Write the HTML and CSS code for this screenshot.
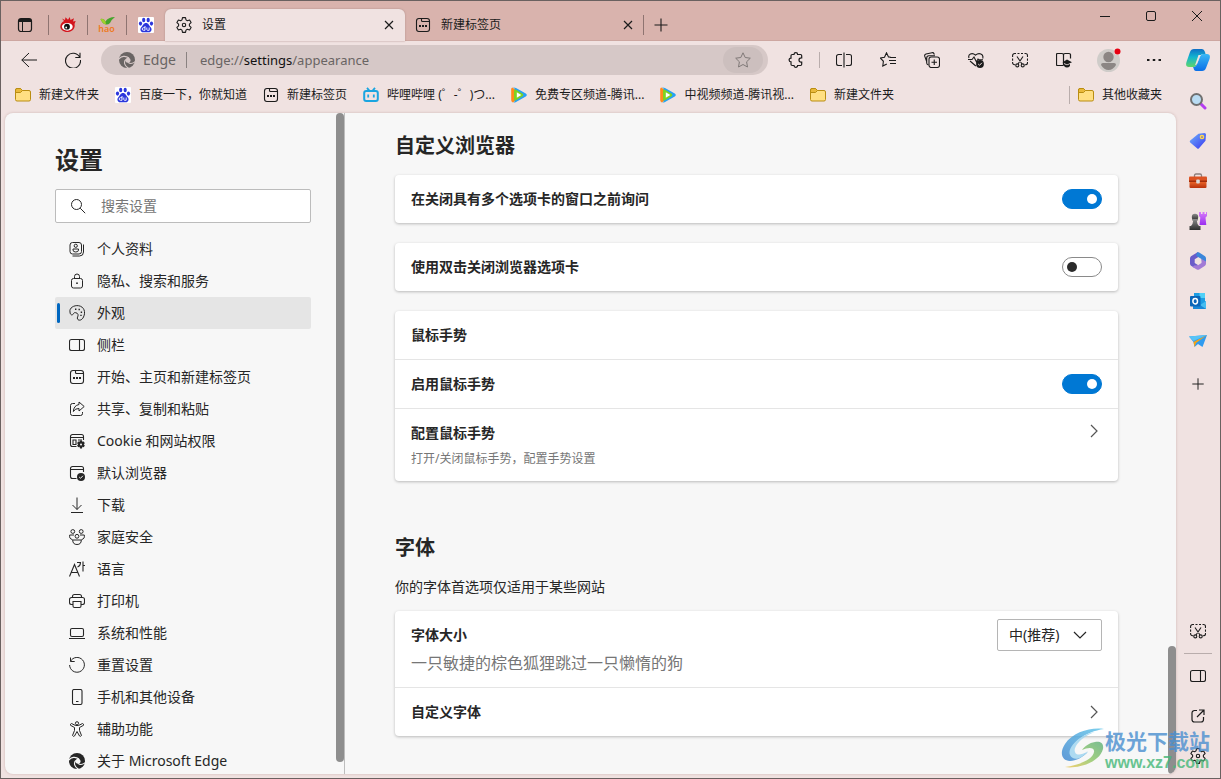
FILE: index.html
```html
<!DOCTYPE html>
<html lang="zh-CN">
<head>
<meta charset="utf-8">
<title>设置</title>
<link rel="stylesheet" href="styles.css">
</head>
<body>
<svg class="sprite" aria-hidden="true">
  <defs>
    <linearGradient id="g-cop1" x1="0" y1="0" x2="0" y2="1"><stop offset="0" stop-color="#0f6fc6"/><stop offset=".45" stop-color="#12b5d0"/><stop offset="1" stop-color="#5fd66a"/></linearGradient>
    <linearGradient id="g-cop2" x1="0" y1="0" x2="0" y2="1"><stop offset="0" stop-color="#39b8f5"/><stop offset="1" stop-color="#0a6fe8"/></linearGradient>
    <linearGradient id="g-tag" x1="0" y1="0" x2="1" y2="1"><stop offset="0" stop-color="#6fb4fb"/><stop offset="1" stop-color="#3a36f0"/></linearGradient>
    <linearGradient id="g-rook" x1="0" y1="0" x2="0" y2="1"><stop offset="0" stop-color="#d77cf9"/><stop offset="1" stop-color="#9b2ff0"/></linearGradient>
    <linearGradient id="g-pawn" x1="0" y1="0" x2="0" y2="1"><stop offset="0" stop-color="#8b8b8b"/><stop offset="1" stop-color="#2e2e2e"/></linearGradient>
    <linearGradient id="g-box" x1="0" y1="0" x2="0" y2="1"><stop offset="0" stop-color="#f06a2c"/><stop offset="1" stop-color="#b8320c"/></linearGradient>
    <linearGradient id="g-wm1" x1="0" y1="1" x2="1" y2="0"><stop offset="0" stop-color="#3a83cf"/><stop offset="1" stop-color="#5cc5ea"/></linearGradient>
    <linearGradient id="g-wm2" x1="0" y1="1" x2="1" y2="0"><stop offset="0" stop-color="#f3c64d"/><stop offset=".5" stop-color="#8cc665"/><stop offset="1" stop-color="#5aae78"/></linearGradient>
  </defs>
  <symbol id="gear" viewBox="0 0 16 16"><g fill="none" stroke="currentColor" stroke-linejoin="round" stroke-width="1.100"><circle cx="8" cy="8" r="1.700"/><path d="M6.500.6h3l.5 2.300 1.300.8 2.300-.7 1.500 2.600-1.700 1.600v1.600l1.700 1.600-1.500 2.600-2.300-.7-1.300.8-.5 2.300h-3l-.5-2.300-1.300-.8-2.300.7L.9 10.400l1.700-1.600V7.200L.9 5.600 2.400 3l2.300.7 1.300-.8z"/></g></symbol>
  <symbol id="newtab" viewBox="0 0 16 16"><g fill="none" stroke="currentColor" stroke-width="1.100"><rect x="1.500" y="1.500" width="13" height="13" rx="2.500"/><path d="M6.500 1.500v2q0 1 1 1h7"/></g><path fill="currentColor" d="M4 8h2v2H4zM7 8h2v2H7zM10 8h2v2h-2z"/></symbol>
  <symbol id="tabs" viewBox="0 0 16 16"><rect x="1.500" y="1.500" width="13" height="13" rx="2.500" fill="none" stroke="currentColor" stroke-width="1.200"/><path d="M2 4.500h12M5.500 4.500v9.500" stroke="currentColor" fill="none"/><path fill="currentColor" d="M2 2h12v2.500H2z"/></symbol>
  <symbol id="close" viewBox="0 0 16 16"><path d="M4 4l8 8M12 4l-8 8" fill="none" stroke="currentColor" stroke-width="1.200"/></symbol>
  <symbol id="plus" viewBox="0 0 16 16"><path d="M8 1.500v13M1.500 8h13" fill="none" stroke="currentColor" stroke-width="1.100"/></symbol>
  <symbol id="folder" viewBox="0 0 16 16"><path d="M.5 3a1.500 1.500 0 0 1 1.500-1.500h3.500L7.500 3.500H14A1.500 1.500 0 0 1 15.500 5v7.500A1.500 1.500 0 0 1 14 14H2A1.500 1.500 0 0 1 .5 12.500z" fill="#ffdf82" stroke="#b98d12"/><path d="M.5 5.500h5l2-2-2-2H2A1.500 1.500 0 0 0 .5 3z" fill="#e9b93a" stroke="#b98d12"/></symbol>
  <symbol id="baidu" viewBox="0 0 16 16"><rect width="16" height="16" rx="1" fill="#fff"/><g fill="#2b35dc"><ellipse cx="5.700" cy="3" rx="1.600" ry="2.300"/><ellipse cx="10.200" cy="3" rx="1.600" ry="2.300"/><ellipse cx="2.500" cy="6.600" rx="1.600" ry="2.100"/><ellipse cx="13.500" cy="6.600" rx="1.600" ry="2.100"/><path d="M8 6c2.500 0 3 2.500 4.500 4 2.300 2.500.5 5.500-1.800 5.300-1.800-.2-3.600-.2-5.400 0C3 15.500 1.200 12.500 3.500 10 5 8.500 5.500 6 8 6z"/></g><path d="M7 9v4.300H5.500a1 1 0 0 1 0-2.600H7M8.800 10.500v2q0 .8.800.8h1.600v-2.800" fill="none" stroke="#fff" stroke-width=".9"/></symbol>
  <symbol id="tencent" viewBox="0 0 16 16"><path d="M1.200.6Q-.2 1 .2 3.500v9q-.3 2.300 1.700 2.900L7 12V4z" fill="#ff8a1f"/><path d="M2 .5q1.500-.3 3 .5l9.800 5.500q2 1.500 0 3L5 15q-1.500.8-3 .4 2-.5 2-3V3.500Q4 1 2 .5z" fill="#27a1f4"/><path d="M3 4q0-2.300 2-1.200l6.700 4q1.400 1.200 0 2.400L5 13.200Q3 14.300 3 12z" fill="#7ed321"/><path d="M5.800 5.300L10.300 8l-4.500 2.700z" fill="#fff"/></symbol>
  <symbol id="edge" viewBox="0 0 16 16"><circle cx="8" cy="8" r="8" fill="currentColor"/><g fill="none" stroke="var(--cut)" stroke-width="1.100"><path d="M-.2 7.200C2 4 6.500 3.300 10 6"/><path d="M6.800 7.500c-2.600 2.700-1 6.700 2.700 8.700"/><path d="M9 10.300c2 1.700 4.500 1.600 7.500-.8"/></g><circle cx="9" cy="8.300" r="2.500" fill="var(--cut)"/></symbol>
  <symbol id="shot" viewBox="0 0 16 16"><g fill="none" stroke="currentColor" stroke-width="1.100"><path d="M.6 5V3.500a2 2 0 0 1 2-2H4M5.500 1.500h2M9 1.500h2M12.500 1.500h1a2 2 0 0 1 2 2V5M15.500 6.500v2.200M15.500 10v.8a2 2 0 0 1-2 2h-.8M.6 6.500v2.200M.6 10v.8a2 2 0 0 0 2 2h.8M5 4.500l5 7.500M11 4.500L6 12"/><circle cx="5.300" cy="13.400" r="1.500"/><circle cx="10.700" cy="13.400" r="1.500"/></g></symbol>
  <symbol id="sidepane" viewBox="0 0 16 16"><rect x=".5" y="2.500" width="15" height="11" rx="2" fill="none" stroke="currentColor" stroke-width="1.100"/><path d="M10.500 2.500v11" fill="none" stroke="currentColor" stroke-width="1.100"/></symbol>
  <symbol id="chevron" viewBox="0 0 16 16"><path d="M5 2l6 6-6 6" fill="none" stroke="currentColor" stroke-width="1.200"/></symbol>
</svg>

<div class="window">
  <header class="titlebar">
    <button class="pin" aria-label="标签操作"><svg><use href="#tabs"/></svg></button>
    <button class="pin" aria-label="微博"><svg viewBox="0 0 16 16"><path d="M4 4L2 1.500 5 3 5.500.2 8 2.700 9.700 0l.8 3L14 1.300l-1 3.200 2.700-.5-1.200 3c1 3.500-1.500 7.500-6.500 8C3.500 15.300.2 12.500.3 9.500.4 7 2 5 4 4z" fill="#d3141c"/><ellipse cx="7.300" cy="9.800" rx="5.400" ry="3.900" fill="#fff"/><circle cx="7" cy="9.700" r="2.900" fill="#111"/><circle cx="6.200" cy="10.500" r=".9" fill="#fff"/></svg></button>
    <button class="pin pin-hao" aria-label="hao"><svg viewBox="0 0 16 8"><path d="M1.500 2Q5 1 6.500 4.500 9 0 16 0q-3 2-5 6-2 2-4 1.500Q3.500 7 1.500 2z" fill="#45a52c"/><path d="M1.500 2Q5 1 6.500 4.500L7 7.500Q3.500 7 1.500 2z" fill="#a0cf2c"/></svg><span>hao</span></button>
    <button class="pin" aria-label="百度"><svg><use href="#baidu"/></svg></button>
    <div class="tab tab-active"><svg><use href="#gear"/></svg><span>设置</span><button aria-label="关闭"><svg><use href="#close"/></svg></button></div>
    <div class="tab"><svg><use href="#newtab"/></svg><span>新建标签页</span><button aria-label="关闭"><svg><use href="#close"/></svg></button></div>
    <button class="newtab" aria-label="新建标签"><svg><use href="#plus"/></svg></button>
    <div class="winctl">
      <button aria-label="最小化"><svg viewBox="0 0 16 16"><path d="M3 8.500h10" stroke="currentColor"/></svg></button>
      <button aria-label="最大化"><svg viewBox="0 0 16 16"><rect x="3.500" y="3.500" width="9" height="9" rx="1.500" fill="none" stroke="currentColor"/></svg></button>
      <button aria-label="关闭窗口"><svg viewBox="0 0 16 16"><path d="M3 3l10 10M13 3L3 13" stroke="currentColor"/></svg></button>
    </div>
  </header>

  <div class="toolbar">
    <button class="tool" aria-label="返回"><svg viewBox="0 0 16 16"><path d="M16 8H.8M8 1L.8 8 8 15" fill="none" stroke="currentColor"/></svg></button>
    <button class="tool" aria-label="刷新"><svg viewBox="0 0 16 16"><path d="M14.800 5.500A7.500 7.500 0 1 0 15.500 8M15 .8V5.500h-4.700" fill="none" stroke="currentColor" stroke-width="1.100"/></svg></button>
    <div class="address">
      <svg class="address-logo"><use href="#edge"/></svg><span class="address-brand">Edge</span>
      <div class="address-url" role="textbox" contenteditable="true" spellcheck="false" aria-label="地址栏">edge://<b>settings</b>/appearance</div>
      <button class="fav" aria-label="收藏"><svg viewBox="0 0 16 16"><path d="M8 .8l2.200 4.700 5.100.7-3.700 3.600.9 5.200L8 12.500 3.500 15l.9-5.200L.7 6.200l5.100-.7z" fill="none" stroke="currentColor" stroke-linejoin="round"/></svg></button>
    </div>
    <button class="tool" aria-label="扩展"><svg viewBox="0 0 16 16"><path d="M6 2.500a1.800 1.800 0 0 1 3.600 0h2.900q1.200 0 1.200 1.200v2.100h-.5a2.200 2.200 0 1 0 0 4.400h.5v2.100q0 1.200-1.200 1.200H9.600a1.800 1.800 0 0 1-3.600 0H4.200Q3 13.500 3 12.300V9.900a1.900 1.900 0 0 1 0-3.800V3.700q0-1.200 1.200-1.200z" fill="none" stroke="currentColor" stroke-width="1.200"/></svg></button>
    <i class="rule"></i>
    <button class="tool" aria-label="分屏"><svg viewBox="0 0 16 16"><path d="M6 2.500H2.500a2 2 0 0 0-2 2v7a2 2 0 0 0 2 2H6M10 2.500h3.500a2 2 0 0 1 2 2v7a2 2 0 0 1-2 2H10M8 .5v15" fill="none" stroke="currentColor" stroke-width="1.100"/></svg></button>
    <button class="tool" aria-label="收藏夹"><svg viewBox="0 0 16 16"><path d="M10.800 5.200l-2.300-.3L6.500.8 4.500 5.200l-4.100.8 3 3.300L2.800 14l4-2M10 5.500h6M9 8.500h7M10 11.500h6" fill="none" stroke="currentColor" stroke-width="1.100"/></svg></button>
    <button class="tool" aria-label="集锦"><svg viewBox="0 0 16 16"><g fill="none" stroke="currentColor" stroke-width="1.100"><path d="M2.700 9.500L.7 4.200Q.3 2.500 2 2L8 .7q1.500-.3 2 1l.3 1M4.500 13Q2.700 12.500 2.700 11V6q0-2.200 2.200-2.200H11"/><rect x="5" y="5" width="10.500" height="10.500" rx="2.200"/><path d="M10.250 7.500v5.500M7.500 10.250H13"/></g></svg></button>
    <button class="tool" aria-label="性能"><svg viewBox="0 0 16 16"><path d="M1 6C-.3 2.500 4 0 7.500 3.200 11 0 16 2 14.700 6.500M0 7.500h4L6 5l2.500 5 1.500-3 1 .8h4M2 9l5.800 5" fill="none" stroke="currentColor" stroke-width="1.100"/><circle cx="12" cy="12" r="3.900" fill="currentColor"/><path d="M10.200 12l1.300 1.300 2.400-2.500" fill="none" stroke="#f0e2e1"/></svg></button>
    <button class="tool" aria-label="截图"><svg><use href="#shot"/></svg></button>
    <button class="tool" aria-label="阅读"><svg viewBox="0 0 16 16"><path d="M7.500 13.500H1.500q-1 0-1-1v-10q0-1 1-1H6q1.500 0 1.500 1.500v10.500M7.500 3Q7.500 1.500 9 1.500h4q1.500 0 1.500 1v4" fill="none" stroke="currentColor" stroke-width="1.200"/><path d="M6.500 10.200L11 7.500l5 2.700-5 2.300zM8 12l3 1.300L14 12v2q-3 3-6 0z" fill="currentColor"/></svg></button>
    <button class="tool profile" aria-label="用户"><svg viewBox="0 0 24 24"><circle cx="11.500" cy="12.500" r="11.500" fill="#cfccc9"/><circle cx="11.500" cy="9" r="5.200" fill="#8b8684"/><path d="M4 17q0-2 2-2h11q2 0 2 2-3 5-7.500 5T4 17z" fill="#8b8684"/><circle cx="20.500" cy="3.500" r="3.500" fill="#f0e2e1"/><circle cx="20.500" cy="3.500" r="3" fill="#e60012"/></svg></button>
    <button class="tool" aria-label="更多"><svg viewBox="0 0 16 16"><path d="M1 7h2.500v2H1zM6.750 7h2.500v2h-2.500zM12.500 7H15v2h-2.500z" fill="currentColor"/></svg></button>
    <button class="copilot" aria-label="Copilot"><svg viewBox="0 0 24 22"><path d="M8 0h8q2 0 3 3l.5 2H17q-2 0-3 2l-3 8q-1 3-3 3H3Q-1 18 .5 13L4 3Q5 0 8 0z" fill="url(#g-cop1)"/><path d="M16 22H10q-2 0-2.500-3L7 18h1q2 0 3-3l3-8q1-2 3-2h4q4 0 2.500 5L20 19q-1 3-4 3z" fill="url(#g-cop2)"/><path d="M12.500 6h2.700q-1 1-1.700 3l-2 5q-.7 2-2.500 2.300z" fill="#f0e2e1"/></svg></button>
  </div>

  <div class="body">
    <div class="main">
      <nav class="bookmarks" aria-label="收藏夹栏">
        <a href="#"><svg><use href="#folder"/></svg><span>新建文件夹</span></a>
        <a href="#"><svg><use href="#baidu"/></svg><span>百度一下，你就知道</span></a>
        <a href="#"><svg><use href="#newtab"/></svg><span>新建标签页</span></a>
        <a href="#"><svg viewBox="0 0 16 16"><rect x="1.200" y="4" width="13.600" height="10" rx="2" fill="none" stroke="#1aa5e0" stroke-width="2"/><path d="M4 .8l2.500 3M12 .8l-2.500 3M5.200 7.500v3M10.800 7.500v3" stroke="#1aa5e0" stroke-width="1.800" fill="none"/></svg><span>哔哩哔哩 (゜-゜)つ...</span></a>
        <a href="#"><svg><use href="#tencent"/></svg><span>免费专区频道-腾讯...</span></a>
        <a href="#"><svg><use href="#tencent"/></svg><span>中视频频道-腾讯视...</span></a>
        <a href="#"><svg><use href="#folder"/></svg><span>新建文件夹</span></a>
        <a href="#" class="bookmarks-other"><svg><use href="#folder"/></svg><span>其他收藏夹</span></a>
      </nav>

      <div class="page">
        <aside class="nav">
          <div class="nav-inner">
            <h1>设置</h1>
            <label class="search"><svg viewBox="0 0 16 16"><circle cx="6.500" cy="6.500" r="5" fill="none" stroke="currentColor"/><path d="M10.200 10.200l5 5" stroke="currentColor"/></svg><input type="search" placeholder="搜索设置" aria-label="搜索设置"></label>
            <ul class="menu">
              <li><a href="#"><svg viewBox="0 0 16 16"><g fill="none" stroke="currentColor"><rect x="1" y="1.500" width="11.500" height="11.500" rx="2.500"/><path d="M14.500 3.500V11q0 4-4 4H3.500"/><circle cx="6.750" cy="4.800" r="1.600"/><path d="M4 8h5.500v1q0 2-2.750 2T4 9z"/></g></svg>个人资料</a></li>
              <li><a href="#"><svg viewBox="0 0 16 16"><g fill="none" stroke="currentColor"><rect x="2.500" y="5.500" width="11" height="9.500" rx="2"/><path d="M5.500 5.500V3.500a2.500 2.500 0 0 1 5 0v2"/></g><circle cx="8" cy="10.200" r=".9" fill="currentColor"/></svg>隐私、搜索和服务</a></li>
              <li><a href="#" aria-current="page"><svg viewBox="0 0 16 16"><path d="M1 7C0 3 5 0 9.500.7 15 1.500 17 7 14.500 12c-1.500 3.500-5 4-6 2-.8-1.500 1-2.500.5-4.500S5 7 4.500 8.500C3.500 11 1 10 1 7z" fill="none" stroke="currentColor"/><path d="M6 3.500h1.400v1.400H6zM9.500 3.800h1.400v1.400H9.500zM11.700 6.500h1.400v1.400h-1.400zM11.300 9.700h1.400v1.400h-1.400z" fill="currentColor"/></svg>外观</a></li>
              <li><a href="#"><svg><use href="#sidepane"/></svg>侧栏</a></li>
              <li><a href="#"><svg><use href="#newtab"/></svg>开始、主页和新建标签页</a></li>
              <li><a href="#"><svg viewBox="0 0 16 16"><path d="M6 2.500H3.500a2 2 0 0 0-2 2v8a2 2 0 0 0 2 2h8a2 2 0 0 0 2-2V11M10 1l5.200 4.500L10 10V7.500Q6.500 7.200 4.300 10.500 4.800 4.500 10 3.500z" fill="none" stroke="currentColor" stroke-linejoin="round"/></svg>共享、复制和粘贴</a></li>
              <li><a href="#"><svg viewBox="0 0 16 16"><path d="M7.500 13.500h-4a2 2 0 0 1-2-2v-8a2 2 0 0 1 2-2h9a2 2 0 0 1 2 2V7M1.500 4.500h13M4 7h3v4.500H4zM9 7h4" fill="none" stroke="currentColor" stroke-width="1.100"/><path d="M11 7.500h2l.4 1.300 1.400-.3 1 1.700-1 1.100 1 1.100-1 1.800-1.400-.4L13 15.500h-2l-.5-1.700-1.400.4-1-1.800 1-1.100-1-1.100 1-1.700 1.400.3z" fill="currentColor"/><circle cx="12" cy="11.400" r="1" fill="#f7f7f7"/></svg>Cookie 和网站权限</a></li>
              <li><a href="#"><svg viewBox="0 0 16 16"><path d="M7.500 13.500h-4a2 2 0 0 1-2-2v-8a2 2 0 0 1 2-2h9a2 2 0 0 1 2 2V7M1.500 4.500h13" fill="none" stroke="currentColor" stroke-width="1.100"/><circle cx="12" cy="12" r="4" fill="currentColor"/><path d="M10.200 12l1.300 1.300 2.400-2.500" fill="none" stroke="#f7f7f7"/></svg>默认浏览器</a></li>
              <li><a href="#"><svg viewBox="0 0 16 16"><path d="M8 .5v12M3.500 8L8 12.500 12.500 8M2 15.500h12" fill="none" stroke="currentColor"/></svg>下载</a></li>
              <li><a href="#"><svg viewBox="0 0 16 16"><g fill="none" stroke="currentColor"><circle cx="3.800" cy="2.500" r="1.900"/><circle cx="12.200" cy="2.500" r="1.900"/><circle cx="8" cy="7.300" r="1.900"/><path d="M5 6H.7Q0 10 3.500 10.500M11 6h4.300q.7 4-2.800 4.500M3.700 11h8.600q0 4.500-4.300 4.500T3.700 11z"/></g></svg>家庭安全</a></li>
              <li><a href="#"><svg viewBox="0 0 16 16"><path d="M.5 15.500L5.500 3.500l5 12M2.200 11.500h6.600M8 1.500h3.500q0 3.500-3 4.500M14 .5v10M14 4.500h2" fill="none" stroke="currentColor" stroke-width="1.100"/></svg>语言</a></li>
              <li><a href="#"><svg viewBox="0 0 16 16"><path d="M4 11.500H2.500a2 2 0 0 1-2-2V6.500a2 2 0 0 1 2-2h11a2 2 0 0 1 2 2v3a2 2 0 0 1-2 2H12M3.500 4.500v-1q0-2 2-2h5q2 0 2 2v1M4 8.500h8v4.500q0 1.500-1.500 1.500h-5Q4 14.500 4 13z" fill="none" stroke="currentColor" stroke-width="1.100"/></svg>打印机</a></li>
              <li><a href="#"><svg viewBox="0 0 16 16"><rect x="1.500" y="3.500" width="13" height="8" rx="1.500" fill="none" stroke="currentColor" stroke-width="1.100"/><path d="M0 13.500h16" stroke="currentColor"/></svg>系统和性能</a></li>
              <li><a href="#"><svg viewBox="0 0 16 16"><path d="M1.500 4.300A7.400 7.400 0 1 1 .6 8M1.500.5v4h4.200" fill="none" stroke="currentColor"/></svg>重置设置</a></li>
              <li><a href="#"><svg viewBox="0 0 16 16"><rect x="3.500" y=".5" width="9.500" height="15" rx="1.500" fill="none" stroke="currentColor" stroke-width="1.100"/><path d="M7 12.500h2.500" stroke="currentColor"/></svg>手机和其他设备</a></li>
              <li><a href="#"><svg viewBox="0 0 16 16"><g fill="none" stroke="currentColor" stroke-linejoin="round"><circle cx="8" cy="2.300" r="1.600"/><path d="M2.500 2.500Q1 3 1.500 4.300L5.500 6.500v3l-2 5q1 1.500 2 .5L8 10.500l2.500 4.500q1.300.8 2-.5l-2-5v-3l4-2.200Q15 3 13.500 2.500L9.500 4.500h-3z"/></g></svg>辅助功能</a></li>
              <li><a href="#"><svg class="about"><use href="#edge"/></svg>关于 Microsoft Edge</a></li>
            </ul>
          </div>
          <div class="bar"></div>
        </aside>

        <main class="content">
          <section>
            <h2>自定义浏览器</h2>
            <div class="card"><label class="row"><span>在关闭具有多个选项卡的窗口之前询问</span><input class="switch" type="checkbox" checked></label></div>
            <div class="card"><label class="row"><span>使用双击关闭浏览器选项卡</span><input class="switch" type="checkbox"></label></div>
            <div class="card">
              <div class="row"><span>鼠标手势</span></div>
              <label class="row"><span>启用鼠标手势</span><input class="switch" type="checkbox" checked></label>
              <a class="row row-tall" href="#"><span>配置鼠标手势<small>打开/关闭鼠标手势，配置手势设置</small></span><svg class="go"><use href="#chevron"/></svg></a>
            </div>
          </section>
          <section class="fonts">
            <h2>字体</h2>
            <p>你的字体首选项仅适用于某些网站</p>
            <div class="card">
              <div class="row row-size"><span><label for="size">字体大小</label><em>一只敏捷的棕色狐狸跳过一只懒惰的狗</em></span>
                <div class="select"><select id="size"><option>中(推荐)</option></select><svg class="down"><use href="#chevron"/></svg></div></div>
              <a class="row" href="#"><span>自定义字体</span><svg class="go"><use href="#chevron"/></svg></a>
            </div>
          </section>
        </main>
        <div class="bar bar-page"></div>
      </div>
    </div>

    <aside class="dock">
      <button aria-label="搜索"><svg viewBox="0 0 18 18"><path d="M11 11l5 5" stroke="#b43df0" stroke-width="3" stroke-linecap="round"/><circle cx="7.500" cy="7.500" r="5.500" fill="#b9dcf3" stroke="#707070" stroke-width="2"/></svg></button>
      <button aria-label="购物"><svg viewBox="0 0 18 18"><path d="M9.500 1.800L15.500 1q1.500 0 1.500 1.500l-.5 6.300L10 16.200q-1 1-2 0L1.200 10.500q-1-1 0-2z" fill="url(#g-tag)"/><circle cx="13" cy="5" r="1.600" fill="#5560d8" stroke="#ffd84d" stroke-width="1.500"/></svg></button>
      <button aria-label="工具"><svg viewBox="0 0 18 18"><path d="M5.500 5V3.500Q5.500 2 7 2h4q1.500 0 1.500 1.500V5" fill="none" stroke="#8d7f7c" stroke-width="1.300"/><path d="M1 4.500h16q1 0 1 1V9H0V5.500q0-1 1-1z" fill="#dc5222"/><path d="M.5 9h17v6q0 1-1 1h-15q-1 0-1-1z" fill="url(#g-box)"/><path d="M0 8.500h18V10H0z" fill="#a12d0b"/><rect x="7.200" y="7.500" width="3.600" height="4" rx="1" fill="#d9d9d9"/></svg></button>
      <button aria-label="游戏"><svg viewBox="0 0 18 18"><path d="M10 0h2v2h1.500V0h2v2H17V0h1v4l-1.500 1.500.8 7.500H10.500l.8-7.500L10 4z" fill="url(#g-rook)"/><circle cx="6" cy="5" r="3.200" fill="url(#g-pawn)"/><path d="M3 7h6v1.500H7.800Q8 12 10 14h1.500v4H.5v-4H2q2-2 2.200-5.500H3z" fill="url(#g-pawn)"/></svg></button>
      <button aria-label="Microsoft 365"><svg viewBox="0 0 18 18"><path d="M9 0L2 4.200Q1 5 1 6.500v5Q1 13 2 13.800l3.300 2 4-2.500L5.700 11V7.200L11 4z" fill="#6a5cc9"/><path d="M8 .6q1-.8 2.200 0L16 4.200q1 .8 1 2.300v4.300l-4.500-2.600V7L7 3.800z" fill="#3b86da"/><path d="M17 9.500v2q0 1.500-1 2.300l-5.800 3.600q-1.200.8-2.400 0L3.500 15l1.700-1.500L9 13.200l3.500-2.300V7z" fill="#a27bd6"/></svg></button>
      <button aria-label="Outlook"><svg viewBox="0 0 18 18"><path d="M5 1h11v16H5z" fill="#1c9de3"/><path d="M10.500 1H16v5h-5.500z" fill="#50d0f7"/><path d="M4 9l7 4 6-4v8H4z" fill="#1887d6"/><path d="M11 13l6-4v8z" fill="#45bdf0"/><rect x="1" y="4" width="10.500" height="10.500" rx="1" fill="#0b66b8"/><ellipse cx="6.200" cy="9.200" rx="2.300" ry="2.700" fill="none" stroke="#fff" stroke-width="1.500"/></svg></button>
      <button aria-label="发送"><svg viewBox="0 0 18 18"><path d="M0 4.500L18 3 13.500 15 9 12l-3.500 3-1-5z" fill="#2f9bf0"/><path d="M4.500 10L18 3 7 11l-1.500 4z" fill="#f6a313"/><path d="M0 4.500L18 3 4.500 9z" fill="#58c4f7"/></svg></button>
      <button class="dock-add" aria-label="添加"><svg><use href="#plus"/></svg></button>
      <div class="dock-bottom">
        <button aria-label="截图"><svg><use href="#shot"/></svg></button>
        <hr>
        <button aria-label="侧栏"><svg><use href="#sidepane"/></svg></button>
        <button aria-label="打开链接"><svg viewBox="0 0 16 16"><path d="M7 2.500H4.500a2.500 2.500 0 0 0-2.500 2.500v6.500A2.500 2.500 0 0 0 4.500 14H11a2.500 2.500 0 0 0 2.500-2.500V9M9 2h5v5M14 2L7 9" fill="none" stroke="currentColor" stroke-width="1.200"/></svg></button>
        <button aria-label="设置"><svg><use href="#gear"/></svg></button>
      </div>
    </aside>
  </div>

  <div class="watermark">
    <svg viewBox="0 0 44 42"><path d="M43 1C30-1 12 4 4 16c-6 9-3 17 5 17 6 0 13-4 18-9-7 4-14 5-16 1C8 17 22 4 43 1z" fill="url(#g-wm1)"/><path d="M34 4C22 8 12 18 14 24c1 4 8 3 13-1-7 9-15 10-18 4C6 19 20 6 34 4z" fill="#9bd4f0"/><path d="M4 39c10 2 34-3 38-18 1-6-3-8-8-7-6 1-10 4-13 8 6-3 13-3 12 2-1 7-14 13-29 15z" fill="url(#g-wm2)"/></svg>
    <p><strong>极光下载站</strong><span>www.xz7.com</span></p>
  </div>
</div>
</body>
</html>
```

FILE: styles.css
```css
* { box-sizing: border-box; }

body {
  margin: 0;
  font: 14px/20px "Noto Sans", "Noto Sans CJK SC", sans-serif;
  color: #262626;
}

button {
  display: flex;
  align-items: center;
  justify-content: center;
  padding: 0;
  border: 0;
  background: none;
  color: inherit;
  font: inherit;
}

a { color: inherit; text-decoration: none; }
svg { width: 16px; height: 16px; flex: none; display: block; }
h1, h2, p, ul { margin: 0; padding: 0; }
.sprite { position: absolute; width: 0; height: 0; }

.window {
  position: relative;
  display: flex;
  flex-direction: column;
  height: 100vh;
  border: 1px solid #6a6160;
  background: #f0e2e1;
  overflow: hidden;
}

/* Title bar */
.titlebar {
  display: flex;
  align-items: flex-end;
  height: 40px;
  padding-left: 1px;
  background: #d9b3ad;
  box-shadow: inset 0 -1px #cda7a1;
  color: #1b1b1b;
  font-size: 12px;
}
.pin { position: relative; width: 39px; height: 32px; }
.pin:first-child { width: 46px; }
.pin + .pin::before, .newtab::before {
  content: "";
  position: absolute;
  left: 0;
  top: 6px;
  height: 20px;
  border-left: 1px solid #8f7471;
}
.pin-hao { flex-direction: column; }
.pin-hao svg { height: 8px; }
.pin-hao span { color: #ee7a22; font-size: 9px; line-height: 8px; font-weight: 600; }
.tab {
  display: flex;
  align-items: center;
  gap: 10px;
  width: 238px;
  height: 32px;
  padding: 0 7px 0 10px;
}
.tab span { flex: 1; }
.tab-active {
  width: 240px;
  padding: 0 8px 0 11px;
  background: #f0e2e1;
  border-radius: 6px 6px 0 0;
  box-shadow: 0 0 2px #a98984;
}
.newtab { position: relative; width: 36px; height: 32px; }
.winctl { display: flex; align-self: flex-start; margin-left: auto; }
.winctl button { width: 46px; height: 30px; }

/* Toolbar */
.toolbar {
  display: flex;
  align-items: center;
  height: 38px;
  padding-left: 6px;
  color: #1b1b1b;
}
.tool { width: 44px; height: 32px; }
.rule { height: 16px; border-left: 1px solid #b9adac; margin: 0 2px 0 1px; }
.profile { width: 46px; }
.profile svg { width: 24px; height: 24px; }
.copilot { width: 44px; }
.copilot svg { width: 24px; height: 22px; }
.address {
  display: flex;
  flex: 1;
  align-items: center;
  height: 30px;
  margin: 0 6px;
  padding: 0 5px 0 18px;
  border-radius: 15px;
  background: #d6c8c7;
  color: #696463;
}
.address-logo { --cut: #d6c8c7; margin-right: 8px; }
.address-brand { padding-right: 10px; border-right: 1px solid #8a8281; line-height: 16px; }
.address-url { flex: 1; padding-left: 13px; outline: 0; font-size: 13px; }
.address-url b { font-weight: 400; color: #111; }
.fav { width: 40px; height: 26px; border-radius: 13px; background: #ccbfbe; color: #807978; }

/* Bookmarks and side dock */
.body { display: flex; flex: 1; min-height: 0; }
.main { display: flex; flex-direction: column; flex: 1; min-width: 0; padding: 0 0 4px 4px; }
.bookmarks {
  display: flex;
  gap: 16px;
  height: 34px;
  padding: 7px 14px 9px 10px;
  font-size: 12px;
  line-height: 18px;
  white-space: nowrap;
  color: #1b1b1b;
}
.bookmarks a { display: flex; align-items: center; gap: 8px; }
.bookmarks-other { margin-left: auto; padding-left: 8px; border-left: 1px solid #b9adac; }
.dock { display: flex; flex-direction: column; align-items: center; width: 44px; padding: 2px 0; color: #1b1b1b; }
.dock button { width: 40px; height: 40px; }
.dock > button svg { width: 18px; height: 18px; }
.dock > .dock-add svg { width: 14px; height: 14px; }
.dock-add { margin-top: 3px; }
.dock-bottom { margin-top: auto; }
.dock hr { width: 28px; height: 1px; margin: 2px auto; border: 0; background: #b9adac; }

/* Settings page */
.page {
  display: flex;
  flex: 1;
  min-height: 0;
  border-radius: 8px;
  background: #f7f7f7;
  box-shadow: 0 0 3px #cdb5b2;
  overflow: hidden;
}
.bar { width: 8px; border-radius: 4px; background: #8e8e8e; }
.nav { display: flex; width: 340px; padding-left: 50px; border-right: 1px solid #bdbdbd; }
.nav .bar { margin-bottom: 12px; }
.nav-inner { flex: 1; padding: 31px 25px 0 0; }
h1 { font-size: 24px; line-height: 32px; font-weight: 700; }
.search {
  display: flex;
  align-items: center;
  gap: 15px;
  height: 34px;
  margin: 13px 0 10px;
  padding-left: 14px;
  border: 1px solid #bcbcbc;
  border-radius: 2px;
  background: #fff;
}
.search input { flex: 1; min-width: 0; border: 0; outline: 0; padding: 0; background: none; font: inherit; }
.search input::placeholder { color: #767676; }
.menu { list-style: none; }
.menu a { position: relative; display: flex; align-items: center; gap: 12px; height: 32px; padding-left: 14px; border-radius: 2px; }
.menu a[aria-current] { background: #e5e5e5; }
.menu a[aria-current]::before {
  content: "";
  position: absolute;
  left: 2px;
  top: 6px;
  width: 3px;
  height: 20px;
  border-radius: 2px;
  background: #0067c0;
}
.about { --cut: #f7f7f7; }

.content { flex: 1; min-width: 0; padding: 19px 50px 0 50px; }
.bar-page { align-self: flex-end; height: 128px; }
h2 { font-size: 20px; line-height: 28px; font-weight: 700; }
.card { border-radius: 4px; background: #fff; box-shadow: 0 1px 3px #00000040; }
h2 + .card { margin-top: 15px; }
.card + .card { margin-top: 20px; }
.row { display: flex; align-items: center; justify-content: space-between; min-height: 48px; padding: 0 16px; font-weight: 600; }
.row + .row { border-top: 1px solid #e5e5e5; min-height: 49px; }
.row-tall { align-items: flex-start; padding: 14px 16px 12px; }
.row small { display: block; margin-top: 6px; font-size: 12px; font-weight: 400; color: #767676; }
.go { color: #555; }
.row-size { align-items: flex-start; padding: 8px 16px; min-height: 76px; }
.row-size > span { padding-top: 6px; }
.row em { display: block; margin-top: 8px; font-size: 16px; font-style: normal; font-weight: 400; color: #767676; }
.fonts { margin-top: 53px; }
.fonts p { margin: 15px 0 14px; }

.switch {
  appearance: none;
  width: 40px;
  height: 20px;
  margin: 0;
  padding: 4px;
  border: 1px solid #8a8a8a;
  border-radius: 10px;
  background: #fff;
}
.switch::before { content: ""; display: block; width: 10px; height: 10px; border-radius: 5px; background: #2b2b2b; }
.switch:checked { border-color: #0078d4; background: #0078d4; }
.switch:checked::before { margin-left: auto; background: #fff; }

.select { display: grid; align-items: center; width: 105px; }
.select > * { grid-area: 1 / 1; }
.select select { appearance: none; height: 32px; padding: 0 11px; border: 1px solid #b5b5b5; border-radius: 2px; background: #fff; color: #262626; font: inherit; font-weight: 400; }
.down { justify-self: end; margin-right: 14px; transform: rotate(90deg); pointer-events: none; }

/* Site mark over the lower right corner */
.watermark { position: absolute; right: 10px; bottom: 6px; display: flex; opacity: 0.8; pointer-events: none; }
.watermark svg { width: 44px; height: 42px; }
.watermark p { display: flex; flex-direction: column; white-space: nowrap; }
.watermark strong { font-size: 21px; line-height: 26px; font-weight: 700; color: #4a8fd0; }
.watermark span { font: 700 16px/18px "Liberation Sans", sans-serif; color: #45b878; }
```
